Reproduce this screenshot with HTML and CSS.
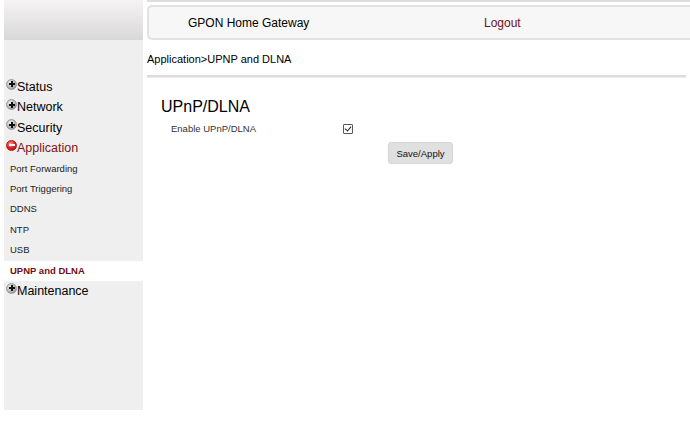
FILE: index.html
```html
<!DOCTYPE html>
<html lang="en">
<head>
  <meta charset="UTF-8" />
  <title>GPON Home Gateway</title>
  <link rel="stylesheet" href="styles.css">
</head>
<body>
  <div class="page">
    <aside class="sidebar">
      <div class="side-top"></div>
      <ul class="menu">
        <li class="menu-item"><span class="icon plus"></span>Status</li>
        <li class="menu-item"><span class="icon plus"></span>Network</li>
        <li class="menu-item"><span class="icon plus"></span>Security</li>
        <li class="menu-item open"><span class="icon minus"></span>Application</li>
        <li class="sub-item">Port Forwarding</li>
        <li class="sub-item">Port Triggering</li>
        <li class="sub-item">DDNS</li>
        <li class="sub-item">NTP</li>
        <li class="sub-item">USB</li>
        <li class="sub-item active">UPNP and DLNA</li>
        <li class="menu-item"><span class="icon plus"></span>Maintenance</li>
      </ul>
    </aside>

    <main class="main">
      <header class="topbar">
        <span class="brand">GPON Home Gateway</span>
        <a class="logout" href="#">Logout</a>
      </header>

      <div class="crumb">Application&gt;UPNP and DLNA</div>
      <div class="rule"></div>

      <section class="panel">
        <h2>UPnP/DLNA</h2>
        <div class="field-row">
          <label class="field-label" for="upnp">Enable UPnP/DLNA</label>
          <input type="checkbox" class="check" id="upnp" checked>
        </div>
        <div class="actions">
          <button class="btn">Save/Apply</button>
        </div>
      </section>
    </main>
  </div>
</body>
</html>
```

FILE: styles.css
```css
* {
  box-sizing: border-box;
  margin: 0;
  padding: 0;
}

body {
  font-family: "Liberation Sans", Arial, sans-serif;
  background: #fff;
  color: #000;
}

.page {
  display: flex;
  gap: 4px;
  padding-left: 4px;
}

/* Sidebar */
.sidebar {
  width: 139px;
  height: 410px;
  background: #efefef;
  flex-shrink: 0;
}

.side-top {
  height: 40px;
  background: linear-gradient(180deg, #f5f3f3, #d9d8d8);
}

.menu {
  list-style: none;
  margin-top: 37px;
}

.menu-item,
.sub-item {
  height: 20.4px;
  line-height: 20.4px;
  white-space: nowrap;
}

.menu-item {
  font-size: 12.5px;
  padding-left: 2px;
  display: flex;
  align-items: center;
}

.menu-item.open {
  color: #7c1518;
}

.sub-item {
  font-size: 9.5px;
  padding-left: 6px;
  color: #222;
}

.sub-item.active {
  background: #fff;
  color: #6e1015;
  font-weight: bold;
}

.icon {
  display: inline-block;
  width: 11px;
  height: 11px;
  border-radius: 50%;
  position: relative;
  margin-top: -6px;
  flex-shrink: 0;
}

.icon.plus {
  background: radial-gradient(circle at 40% 35%, #f4f4f4 0%, #bdbdbd 50%, #7a7a7a 100%);
  border: 1px solid #9a9a9a;
}

.icon.minus {
  background: radial-gradient(circle at 40% 30%, #ff9a9a 0%, #e02424 50%, #a00c0c 100%);
  border: 1px solid #b41414;
}

.icon::before,
.icon::after {
  content: "";
  position: absolute;
  background: #111;
}

.icon::before {
  left: 1.5px;
  top: 3.5px;
  width: 6px;
  height: 2px;
}

.icon.plus::after {
  left: 3.5px;
  top: 1.5px;
  width: 2px;
  height: 6px;
}

.icon.minus::before {
  background: #fff;
}

.icon.minus::after {
  display: none;
}

/* Main */
.main {
  flex: 1;
  border-top: 2px solid #dedede;
  padding-top: 3px;
}

.topbar {
  height: 35px;
  background: #f7f7f7;
  border: 2px solid #e2e2e2;
  border-right: none;
  border-radius: 5px 0 0 5px;
  display: flex;
  align-items: center;
  padding-left: 39px;
  font-size: 12px;
}

.brand {
  width: 296px;
}

.logout {
  color: #6b1216;
  text-decoration: none;
}

.crumb {
  font-size: 11px;
  margin-top: 12px;
  line-height: 14px;
}

.rule {
  height: 3px;
  margin-top: 9px;
  margin-right: 4px;
  background: #dcdcdc;
  border-bottom: 1px solid #ececec;
}

.panel {
  padding: 19px 0 0 14px;
}

.panel h2 {
  font-size: 16px;
  font-weight: normal;
  line-height: 20px;
}

.field-row {
  display: flex;
  align-items: center;
  margin-top: 6px;
  padding-left: 10px;
}

.field-label {
  width: 172px;
  font-size: 9.5px;
  color: #333;
}

.check {
  appearance: none;
  -webkit-appearance: none;
  width: 10px;
  height: 10px;
  margin: 0;
  border: 1px solid #555;
  border-radius: 1px;
  background: #fff;
  position: relative;
}

.check:checked::after {
  content: "";
  position: absolute;
  left: 2px;
  top: 0px;
  width: 3px;
  height: 5px;
  border: solid #222;
  border-width: 0 1px 1px 0;
  transform: rotate(40deg);
}

.actions {
  padding-left: 227px;
  margin-top: 8px;
}

.btn {
  width: 65px;
  height: 22px;
  background: #e0e0e0;
  border: 1px solid #d6d6d6;
  border-radius: 3px;
  font-family: "Liberation Sans", Arial, sans-serif;
  font-size: 9.5px;
  color: #111;
}
```
